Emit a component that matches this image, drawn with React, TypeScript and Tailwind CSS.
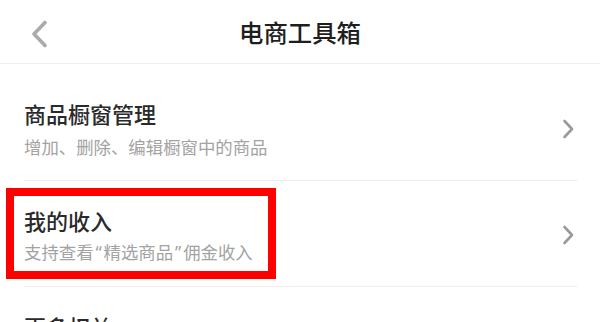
import React from "react";

const font = { fontFamily: '"Noto Sans CJK SC", "Noto Sans", sans-serif' };

function Chevron() {
  return (
    <svg width="12" height="20" viewBox="0 0 12 20" fill="none">
      <path d="M2.5 2 L10 10 L2.5 18" stroke="#9a9a9a" strokeWidth="2.6" strokeLinecap="round" strokeLinejoin="round" />
    </svg>
  );
}

function Q({ c }: { c: string }) {
  return (
    <span className="inline-block w-[10px] text-center" style={{ fontFamily: '"Noto Sans", sans-serif' }}>
      {c}
    </span>
  );
}

function Row({
  title,
  sub,
  rowClass,
  subClass,
  children,
}: {
  title: string;
  sub?: React.ReactNode;
  rowClass: string;
  subClass: string;
  children?: React.ReactNode;
}) {
  return (
    <div className={"relative ml-6 mr-[22px] flex items-center justify-between border-b border-[#efefef] pr-1 " + rowClass}>
      <div className="flex flex-col">
        <div className="text-[22px] leading-[30px] font-medium text-[#2a2a2a]">{title}</div>
        {sub && <div className={"text-[17.4px] leading-[24px] text-[#a3a3a3] " + subClass}>{sub}</div>}
      </div>
      <Chevron />
      {children}
    </div>
  );
}

export default function App() {
  return (
    <div className="w-[600px] h-[322px] overflow-hidden bg-white" style={font}>
      <div className="relative flex h-16 items-center justify-center border-b border-[#ededed]">
        <div className="absolute left-[30px] top-[20px]">
          <svg width="18" height="28" viewBox="0 0 18 28" fill="none">
            <path d="M15 2.5 L4 14 L15 25.5" stroke="#ababab" strokeWidth="3.6" strokeLinecap="round" strokeLinejoin="round" />
          </svg>
        </div>
        <div className="text-[24.4px] leading-[32px] font-medium text-[#1e1e1e]">电商工具箱</div>
      </div>
      <div className="mt-[10px]">
        <Row title="商品橱窗管理" sub="增加、删除、编辑橱窗中的商品" rowClass="pt-6 pb-[21px]" subClass="mt-[7px]" />
        <Row
          title="我的收入"
          sub={
            <>
              支持查看<Q c="“" />精选商品<Q c="”" />佣金收入
            </>
          }
          rowClass="pt-6 pb-[22px]"
          subClass="mt-[5px]"
        >
          <div className="pointer-events-none absolute left-[-18px] top-[7px] h-[91px] w-[270px] border-[8px] border-[#ff0000]" />
        </Row>
        <Row title="更多权益" sub="查看更多电商权益" rowClass="pt-6 pb-[22px]" subClass="mt-[5px]" />
      </div>
    </div>
  );
}
